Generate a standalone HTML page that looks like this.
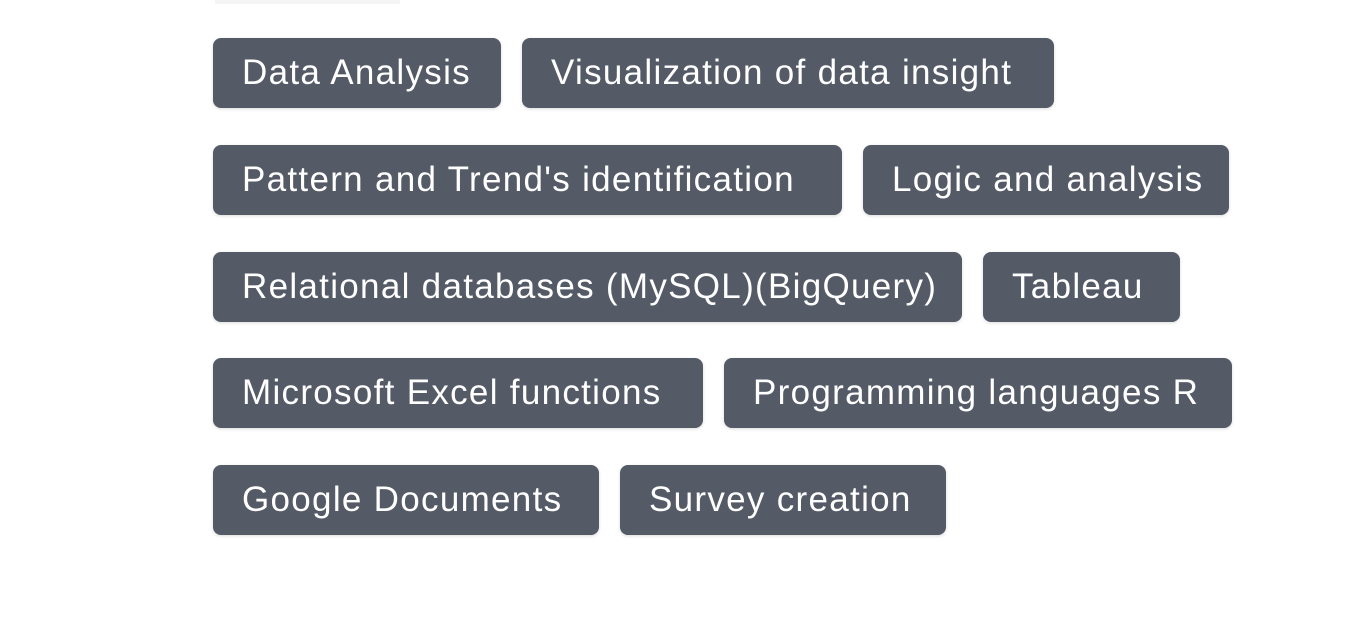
<!DOCTYPE html>
<html><head><style>
body{margin:0;width:1356px;height:628px;background:#fff;position:relative;overflow:hidden;font-family:"Liberation Sans",sans-serif}
.c{position:absolute;height:70px;background:#555a67;border-radius:8px;color:#fff;font-size:35px;letter-spacing:1.3px;line-height:70px;box-sizing:border-box;padding-left:29px;white-space:nowrap;box-shadow:0 1px 3px rgba(0,0,0,.15)}
.t{position:absolute;left:215px;top:-6px;width:185px;height:10px;background:#f5f5f5}
</style></head><body>
<div class="t"></div>
<div class="c" style="left:213px;top:38px;width:288px">Data Analysis</div>
<div class="c" style="left:522px;top:38px;width:532px">Visualization of data insight</div>
<div class="c" style="left:213px;top:145px;width:629px">Pattern and Trend's identification</div>
<div class="c" style="left:863px;top:145px;width:366px">Logic and analysis</div>
<div class="c" style="left:213px;top:252px;width:749px">Relational databases (MySQL)(BigQuery)</div>
<div class="c" style="left:983px;top:252px;width:197px">Tableau</div>
<div class="c" style="left:213px;top:358px;width:490px">Microsoft Excel functions</div>
<div class="c" style="left:724px;top:358px;width:508px">Programming languages R</div>
<div class="c" style="left:213px;top:465px;width:386px">Google Documents</div>
<div class="c" style="left:620px;top:465px;width:326px">Survey creation</div>
</body></html>
